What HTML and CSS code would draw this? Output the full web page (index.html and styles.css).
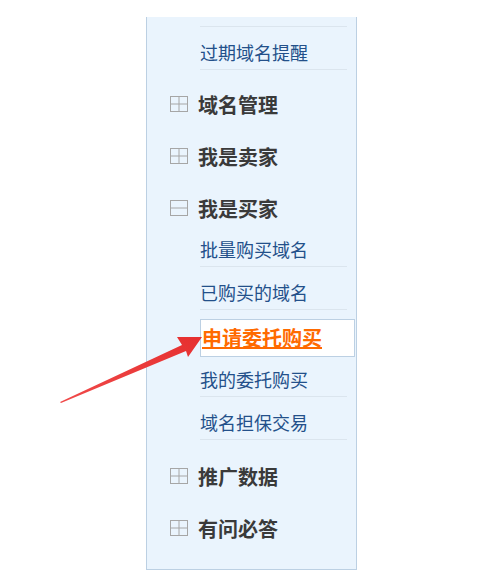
FILE: index.html
```html
<!DOCTYPE html>
<html lang="zh-CN">
<head>
    <meta charset="UTF-8">
    <meta name="viewport" content="width=device-width, initial-scale=1.0">
    <title>我是买家</title>
    <link rel="stylesheet" href="styles.css">
</head>
<body>
    <div class="side-menu">
        <ul class="sub-list">
            <li class="cut-item"></li>
            <li><a href="#">过期域名提醒</a></li>
        </ul>

        <div class="menu-head first">
            <svg class="toggle" width="18" height="16" viewBox="0 0 18 16"><rect x="0.5" y="0.5" width="17" height="15" fill="none" stroke="#a6a6a6"/><line x1="0.5" y1="8" x2="17.5" y2="8" stroke="#a6a6a6"/><line x1="9" y1="0.5" x2="9" y2="15.5" stroke="#a6a6a6"/></svg>
            <span>域名管理</span>
        </div>

        <div class="menu-head">
            <svg class="toggle" width="18" height="16" viewBox="0 0 18 16"><rect x="0.5" y="0.5" width="17" height="15" fill="none" stroke="#a6a6a6"/><line x1="0.5" y1="8" x2="17.5" y2="8" stroke="#a6a6a6"/><line x1="9" y1="0.5" x2="9" y2="15.5" stroke="#a6a6a6"/></svg>
            <span>我是卖家</span>
        </div>

        <div class="menu-head">
            <svg class="toggle" width="18" height="16" viewBox="0 0 18 16"><rect x="0.5" y="0.5" width="17" height="15" fill="none" stroke="#a6a6a6"/><line x1="0.5" y1="8" x2="17.5" y2="8" stroke="#a6a6a6"/></svg>
            <span>我是买家</span>
        </div>
        <ul class="sub-list">
            <li><a href="#">批量购买域名</a></li>
            <li><a href="#">已购买的域名</a></li>
            <li class="active"><a href="#">申请委托购买</a></li>
            <li><a href="#">我的委托购买</a></li>
            <li><a href="#">域名担保交易</a></li>
        </ul>

        <div class="menu-head">
            <svg class="toggle" width="18" height="16" viewBox="0 0 18 16"><rect x="0.5" y="0.5" width="17" height="15" fill="none" stroke="#a6a6a6"/><line x1="0.5" y1="8" x2="17.5" y2="8" stroke="#a6a6a6"/><line x1="9" y1="0.5" x2="9" y2="15.5" stroke="#a6a6a6"/></svg>
            <span>推广数据</span>
        </div>

        <div class="menu-head">
            <svg class="toggle" width="18" height="16" viewBox="0 0 18 16"><rect x="0.5" y="0.5" width="17" height="15" fill="none" stroke="#a6a6a6"/><line x1="0.5" y1="8" x2="17.5" y2="8" stroke="#a6a6a6"/><line x1="9" y1="0.5" x2="9" y2="15.5" stroke="#a6a6a6"/></svg>
            <span>有问必答</span>
        </div>
    </div>

    <!-- strzałka wskazująca aktywną pozycję -->
    <svg class="pointer" width="479" height="586" viewBox="0 0 479 586">
        <defs>
            <linearGradient id="arrowFill" x1="0" y1="1" x2="1" y2="0">
                <stop offset="0" stop-color="#f04a4a"/>
                <stop offset="1" stop-color="#e62f2f"/>
            </linearGradient>
        </defs>
        <polygon points="60,402 182,345 177,337 202,337 188,357 186,351 61,403" fill="url(#arrowFill)"/>
    </svg>
</body>
</html>
```

FILE: styles.css
```css
body {
    background-color: #ffffff;
    margin: 0;
    padding: 0;
    font-family: "Noto Sans CJK SC", "Liberation Sans", sans-serif;
}

.side-menu {
    width: 209px;
    height: 552px;
    margin: 17px 0 0 146px;
    background-color: #eaf4fd;
    border: 1px solid #bcd0e3;
    border-top: none;
}

.sub-list {
    list-style: none;
    margin: 0 9px 0 53px;
    padding: 0;
}

.sub-list li {
    height: 42px;
    border-bottom: 1px solid #dbe5ee;
}

.sub-list li.cut-item {
    height: 9px;
}

.sub-list a {
    display: block;
    padding-top: 13px;
    font-size: 18px;
    line-height: 24px;
    color: #23508a;
    text-decoration: none;
    white-space: nowrap;
}

.sub-list li.active {
    box-sizing: border-box;
    height: 44px;
    padding-top: 9px;
    border-bottom-color: transparent;
}

.sub-list li.active a {
    margin-right: -8px;
    padding: 0 0 0 1px;
    height: 36px;
    line-height: 36px;
    background-color: #ffffff;
    border: 1px solid #bcd0e3;
    font-size: 20px;
    font-weight: bold;
    color: #ff6a00;
    text-decoration: underline;
}

.menu-head {
    display: flex;
    align-items: center;
    gap: 10px;
    height: 32px;
    margin-top: 20px;
    padding-left: 23px;
    font-size: 20px;
    font-weight: bold;
    color: #3a3a3a;
}

.menu-head.first {
    margin-top: 18px;
}

.pointer {
    position: absolute;
    top: 0;
    left: 0;
    pointer-events: none;
}
```
